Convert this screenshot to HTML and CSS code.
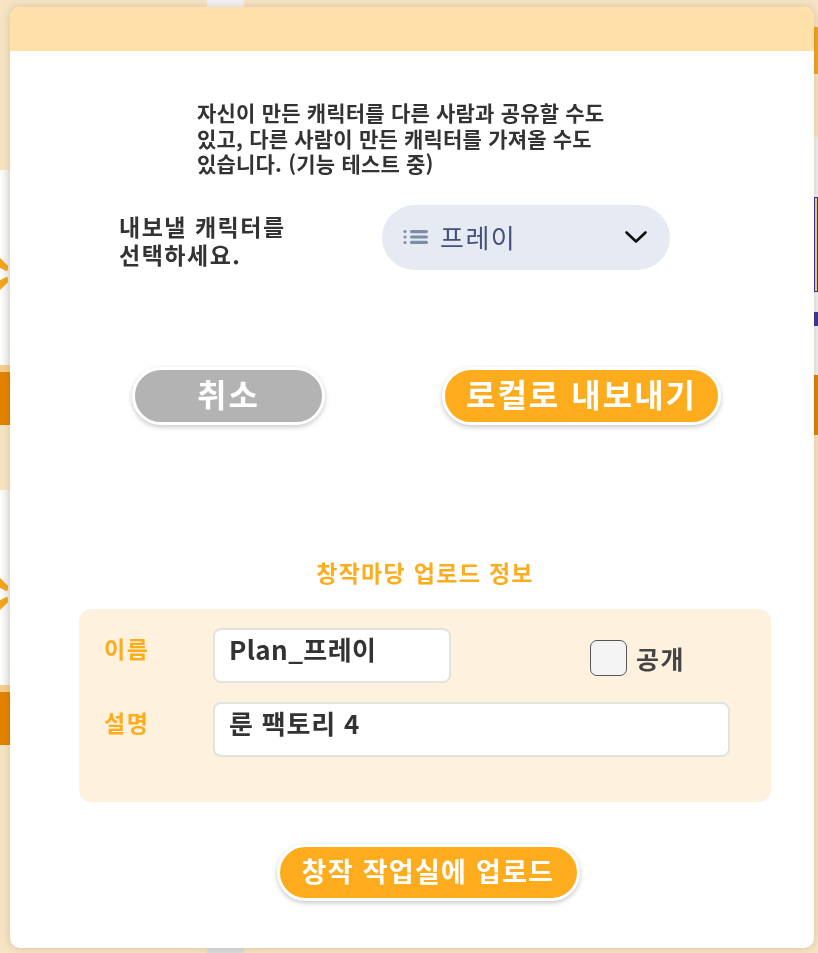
FILE: index.html
```html
<!DOCTYPE html>
<html lang="ko">
<head>
<meta charset="utf-8">
<link rel="stylesheet" href="styles.css">
</head>
<body>
<div class="page">
  <div class="side side-left">
    <div class="bg-card">
      <div class="bg-card-body"><span class="chev chev-up"></span><span class="chev chev-down"></span></div>
      <div class="bg-card-foot"></div>
    </div>
    <div class="bg-card">
      <div class="bg-card-body"><span class="chev chev-up"></span><span class="chev chev-down"></span></div>
      <div class="bg-card-foot"></div>
    </div>
  </div>
  <div class="center-col">
    <div class="tab-top"></div>
    <div class="tab-bottom"></div>
  </div>
  <div class="side side-right">
    <div class="r-btn"></div>
    <div class="r-card">
      <div class="r-thumb"></div>
      <div class="r-text"></div>
    </div>
    <div class="r-foot"></div>
  </div>
</div>

<div class="modal">
  <div class="modal-head"></div>
  <div class="modal-body">
    <p class="intro">자신이 만든 캐릭터를 다른 사람과 공유할 수도<br>있고, 다른 사람이 만든 캐릭터를 가져올 수도<br>있습니다. (기능 테스트 중)</p>

    <div class="select-row">
      <div class="select-label">내보낼 캐릭터를<br>선택하세요.</div>
      <div class="select">
        <svg class="list-icon" width="26" height="16" viewBox="0 0 26 16">
          <circle cx="2" cy="2.5" r="1.6" fill="#7f8ca6"/>
          <circle cx="2" cy="8" r="1.6" fill="#7f8ca6"/>
          <circle cx="2" cy="13.5" r="1.6" fill="#7f8ca6"/>
          <rect x="7" y="1" width="18" height="3.2" rx="1.6" fill="#7f8ca6"/>
          <rect x="7" y="6.4" width="18" height="3.2" rx="1.6" fill="#7f8ca6"/>
          <rect x="7" y="11.8" width="18" height="3.2" rx="1.6" fill="#7f8ca6"/>
        </svg>
        <span class="select-text">프레이</span>
        <svg class="chevron" width="24" height="14" viewBox="0 0 24 14">
          <path d="M2.5 2.5 L12 11.5 L21.5 2.5" fill="none" stroke="#111" stroke-width="2.6" stroke-linecap="round" stroke-linejoin="round"/>
        </svg>
      </div>
    </div>

    <div class="btn-row">
      <button class="btn btn-gray btn-cancel">취소</button>
      <button class="btn btn-orange btn-export">로컬로 내보내기</button>
    </div>

    <div class="upload-area">
      <h2 class="upload-title">창작마당 업로드 정보</h2>
      <div class="info-panel">
        <div class="info-row">
          <label class="info-label">이름</label>
          <div class="field field-name">Plan_프레이</div>
          <div class="public">
            <span class="checkbox"></span>
            <span class="public-text">공개</span>
          </div>
        </div>
        <div class="info-row">
          <label class="info-label">설명</label>
          <div class="field field-desc">룬 팩토리 4</div>
        </div>
      </div>
      <button class="btn btn-orange btn-upload">창작 작업실에 업로드</button>
    </div>
  </div>
</div>
</body>
</html>
```

FILE: styles.css
```css
* { box-sizing: border-box; }

html, body {
  margin: 0;
  padding: 0;
  width: 818px;
  height: 953px;
  overflow: hidden;
  background: #f6e4c4;
  font-family: "Noto Sans CJK KR", "Noto Sans", sans-serif;
}

/* ---------- backdrop page ---------- */
.page {
  display: flex;
  width: 818px;
  height: 953px;
}

.side-left {
  width: 10px;
  overflow: hidden;
  padding-top: 170px;
  display: flex;
  flex-direction: column;
  gap: 65px;
}

.bg-card {
  width: 10px;
  display: flex;
  flex-direction: column;
}

.bg-card-body {
  height: 202px;
  background: linear-gradient(90deg, #ffffff, #ececec);
  border-bottom: 7px solid #f6cf8e;
  display: flex;
  flex-direction: column;
  gap: 4px;
  padding-top: 88px;
}

.chev {
  display: block;
  width: 8px;
  height: 14px;
  background: #f5a41c;
}

.chev-up { clip-path: polygon(0 0, 100% 55%, 100% 100%, 0 70%); border-radius: 0 4px 4px 0; }
.chev-down { clip-path: polygon(0 30%, 100% 0, 100% 45%, 0 100%); border-radius: 0 4px 4px 0; }

.bg-card-foot {
  height: 53px;
  background: #e38300;
}

.center-col {
  flex: 1;
  display: flex;
  flex-direction: column;
  justify-content: space-between;
  padding-left: 197px;
}

.tab-top, .tab-bottom {
  width: 37px;
  height: 7px;
  background: #f3f3f5;
}

.tab-bottom { height: 5px; background: #dcdde2; }

.side-right {
  width: 4px;
  overflow: hidden;
  padding-top: 27px;
  display: flex;
  flex-direction: column;
}

.r-btn {
  height: 50px;
  background: #f2a21d;
  border-bottom: 3px solid #fbe6c0;
}

.r-card {
  margin-top: 60px;
  height: 238px;
  background: #f0f0f0;
  padding-top: 60px;
}

.r-thumb {
  height: 95px;
  background: #f3d27a;
  border: 1px solid #3a2a9a;
}

.r-text {
  margin-top: 20px;
  height: 14px;
  background: #3a3299;
}

.r-foot {
  height: 60px;
  background: #e07f00;
}

/* ---------- modal ---------- */
.modal {
  position: fixed;
  left: 10px;
  top: 7px;
  width: 804px;
  height: 941px;
  background: #ffffff;
  border-radius: 10px;
  overflow: hidden;
  box-shadow: 0 0 10px rgba(120, 90, 40, 0.25);
  display: flex;
  flex-direction: column;
}

.modal-head {
  height: 44px;
  background: #ffe0a8;
  flex: none;
}

.modal-body {
  display: flex;
  flex-direction: column;
}

.intro {
  margin: 49px 0 0 187px;
  font-size: 21px;
  line-height: 25.5px;
  letter-spacing: 0.2px;
  font-weight: 700;
  color: #333333;
}

.select-row {
  margin-top: 28px;
  display: flex;
  align-items: flex-start;
  padding-left: 109px;
}

.select-label {
  width: 263px;
  margin-top: 7px;
  font-size: 23px;
  line-height: 28px;
  letter-spacing: 1.5px;
  font-weight: 700;
  color: #333333;
}

.select {
  width: 288px;
  height: 65px;
  border-radius: 33px;
  background: #e6ebf3;
  display: flex;
  align-items: center;
  padding: 0 22px 0 21px;
}

.list-icon { flex: none; }

.select-text {
  margin-left: 11px;
  font-size: 26px;
  line-height: 30px;
  letter-spacing: 1.5px;
  color: #44507e;
  font-weight: 400;
}

.chevron { margin-left: auto; flex: none; }

.btn-row {
  margin-top: 97px;
  display: flex;
  padding-left: 122px;
  gap: 117px;
}

.btn {
  font-family: "Noto Sans CJK KR", "Noto Sans", sans-serif;
  font-weight: 700;
  color: #ffffff;
  border: 3px solid #ffffff;
  border-radius: 30px;
  box-shadow: 0 2px 5px rgba(0, 0, 0, 0.22);
  padding: 0;
  display: flex;
  align-items: center;
  justify-content: center;
}

.btn-gray { background: #b3b3b3; }
.btn-orange { background: #fdac1e; }

.btn-cancel {
  width: 193px;
  height: 58px;
  font-size: 32px;
  letter-spacing: 2px;
  padding-bottom: 5px;
}

.btn-export {
  width: 279px;
  height: 58px;
  font-size: 32px;
  letter-spacing: 2px;
  padding-bottom: 5px;
}

.upload-area {
  margin-left: 69px;
  width: 692px;
  display: flex;
  flex-direction: column;
  align-items: center;
}

.upload-title {
  margin: 132px 0 0 0;
  font-size: 23px;
  line-height: 30px;
  letter-spacing: 1.3px;
  font-weight: 700;
  color: #fdac1e;
}

.info-panel {
  margin-top: 22px;
  width: 692px;
  height: 193px;
  background: #fef2df;
  border-radius: 12px;
  padding: 19px 0 0 25px;
  display: flex;
  flex-direction: column;
  gap: 19px;
}

.info-row {
  display: flex;
  align-items: flex-start;
}

.info-label {
  width: 109px;
  margin-top: 5px;
  font-size: 23px;
  line-height: 30px;
  letter-spacing: 1.5px;
  font-weight: 700;
  color: #fdac1e;
}

.field {
  height: 55px;
  background: #ffffff;
  border: 2px solid #dfe4df;
  border-radius: 8px;
  padding: 2px 0 0 14px;
  font-size: 26px;
  line-height: 34px;
  letter-spacing: 0.4px;
  font-weight: 700;
  color: #333333;
}

.field-name { width: 238px; }
.field-desc { width: 517px; letter-spacing: 0.8px; }

.public {
  margin: 12px 0 0 139px;
  display: flex;
  align-items: center;
  gap: 9px;
}

.checkbox {
  width: 37px;
  height: 36px;
  background: #f4f4f4;
  border: 1px solid #555555;
  border-radius: 7px;
}

.public-text {
  font-size: 25px;
  line-height: 30px;
  letter-spacing: 1.5px;
  font-weight: 700;
  color: #444444;
}

.btn-upload {
  margin-top: 42px;
  width: 303px;
  height: 57px;
  font-size: 27px;
  letter-spacing: 1.3px;
  padding-bottom: 4px;
  align-self: center;
  margin-left: 6px;
}
```
